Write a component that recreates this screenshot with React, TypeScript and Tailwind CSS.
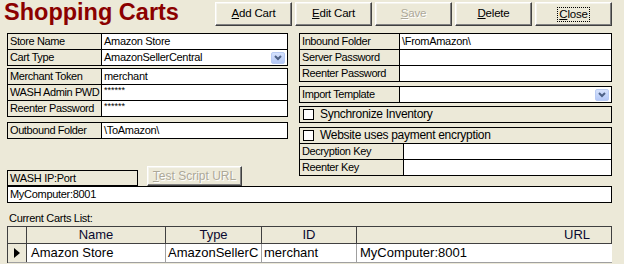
import type { ReactNode } from 'react';

const font = "font-['Liberation_Sans',Arial,sans-serif]";

type Row = { label: string; value?: string; combo?: boolean; small?: boolean };

function Btn({ children, disabled, focus, className = '' }: { children: ReactNode; disabled?: boolean; focus?: boolean; className?: string }) {
    return (
        <div
            className={`flex items-center justify-center bg-[#ECE9D8] border border-t-white border-l-white border-r-[#404040] border-b-[#404040] shadow-[inset_-1px_-1px_0_#808080,inset_1px_1px_0_#F4F3EC] ${
                disabled ? 'text-[#ACA899] [text-shadow:1px_1px_0_#fff]' : 'text-black'
            } ${className}`}
        >
            {focus ? (
                <span className="border border-dotted border-black px-px leading-[13px]">{children}</span>
            ) : (
                children
            )}
        </div>
    );
}

function ComboButton() {
    return (
        <div className="mr-[2px] flex h-[12px] w-[14px] items-center justify-center rounded-[2px] bg-gradient-to-b from-[#D6E2FC] to-[#B4C8F6] border border-[#B9CBF3]">
            <svg width="8" height="6" viewBox="0 0 8 6">
                <path d="M1 1 L4 4 L7 1" stroke="#4D6185" strokeWidth="2" fill="none" />
            </svg>
        </div>
    );
}

function FieldGroup({ rows, labelW }: { rows: Row[]; labelW: number }) {
    return (
        <div className="border border-black">
            {rows.map((r, i) => (
                <div key={r.label} className={`flex ${i > 0 ? 'h-[16px] border-t border-black' : 'h-[15px]'}`}>
                    <div
                        className="shrink-0 border-r border-black bg-[#ECE9D8] pl-[2px] text-[11px] leading-[15px] tracking-[-0.4px] whitespace-nowrap overflow-hidden"
                        style={{ width: labelW }}
                    >
                        {r.label}
                    </div>
                    <div className="flex flex-1 items-center bg-white">
                        <span
                            className={`flex-1 pl-[2px] whitespace-nowrap ${
                                r.small ? 'self-start text-[9px] leading-[10px]' : 'text-[11px] leading-[15px] tracking-[-0.3px]'
                            }`}
                        >
                            {r.value}
                        </span>
                        {r.combo && <ComboButton />}
                    </div>
                </div>
            ))}
        </div>
    );
}

function CheckRow({ label }: { label: string }) {
    return (
        <div className="flex h-[15px] items-center bg-[#ECE9D8] pl-[3px]">
            <div className="h-[11px] w-[11px] border border-black bg-white" />
            <span className="ml-[6px] text-[12px] leading-[15px] tracking-[-0.3px]">{label}</span>
        </div>
    );
}

export default function App() {
    return (
        <div className={`${font} h-[264px] w-[624px] overflow-hidden bg-[#ECE9D8] text-black`}>
            {/* Header */}
            <div className="flex h-[33px]">
                <div className="w-[215px] pl-[4px] pt-[1px] text-[23.5px] font-bold leading-[23px] text-[#8B0000]">
                    Shopping Carts
                </div>
                <div className="flex gap-[3px] pt-[2px] text-[11.5px] tracking-[-0.2px]">
                    <Btn className="h-[24px] w-[77px]"><span><u>A</u>dd Cart</span></Btn>
                    <Btn className="h-[24px] w-[77px]"><span><u>E</u>dit Cart</span></Btn>
                    <Btn className="h-[24px] w-[77px]" disabled><span><u>S</u>ave</span></Btn>
                    <Btn className="h-[24px] w-[77px]"><span><u>D</u>elete</span></Btn>
                    <Btn className="h-[24px] w-[77px]" focus><span><u>C</u>lose</span></Btn>
                </div>
            </div>

            {/* Form columns */}
            <div className="flex gap-[11px] px-[7px]">
                <div className="flex w-[281px] flex-col">
                    <FieldGroup
                        labelW={94}
                        rows={[
                            { label: 'Store Name', value: 'Amazon Store' },
                            { label: 'Cart Type', value: 'AmazonSellerCentral', combo: true },
                        ]}
                    />
                    <div className="mt-[2px]">
                        <FieldGroup
                            labelW={94}
                            rows={[
                                { label: 'Merchant Token', value: 'merchant' },
                                { label: 'WASH Admin PWD', value: '******', small: true },
                                { label: 'Reenter Password', value: '******', small: true },
                            ]}
                        />
                    </div>
                    <div className="mt-[5px]">
                        <FieldGroup labelW={94} rows={[{ label: 'Outbound Folder', value: '\\ToAmazon\\' }]} />
                    </div>
                    <div className="mt-[27px] flex h-[20px] items-end gap-[9px]">
                        <div className="h-[16px] w-[131px] border border-black pl-[2px] text-[11px] leading-[14px] tracking-[-0.3px]">
                            WASH IP:Port
                        </div>
                        <Btn className="h-[20px] w-[95px] self-start text-[12px]" disabled>
                            <span><u>T</u>est Script URL</span>
                        </Btn>
                    </div>
                </div>

                <div className="flex w-[313px] flex-col">
                    <FieldGroup
                        labelW={100}
                        rows={[
                            { label: 'Inbound Folder', value: '\\FromAmazon\\' },
                            { label: 'Server Password', value: '' },
                            { label: 'Reenter Password', value: '' },
                        ]}
                    />
                    <div className="mt-[4px]">
                        <FieldGroup labelW={100} rows={[{ label: 'Import Template', value: '', combo: true }]} />
                    </div>
                    <div className="mt-[3px] border border-black">
                        <CheckRow label="Synchronize Inventory" />
                    </div>
                    <div className="mt-[4px] border border-black">
                        <CheckRow label="Website uses payment encryption" />
                        <div className="border-t border-black">
                            <div className="-m-px">
                                <FieldGroup
                                    labelW={104}
                                    rows={[
                                        { label: 'Decryption Key', value: '' },
                                        { label: 'Reenter Key', value: '' },
                                    ]}
                                />
                            </div>
                        </div>
                    </div>
                </div>
            </div>

            {/* IP field */}
            <div className="mx-[7px] mr-[12px] h-[17px] border border-black bg-white pl-[2px] text-[11px] leading-[15px] tracking-[-0.3px]">
                MyComputer:8001
            </div>

            <div className="h-[23px] pl-[9px] pt-[9px] text-[11px] leading-[12px] tracking-[-0.3px]">Current Carts List:</div>

            {/* Grid */}
            <div className="ml-[7px] w-[605px] border-t border-l border-[#404040] text-[13px]">
                <div className="flex h-[17px] border-b border-[#404040] bg-[#ECE9D8] leading-[16px] text-[#0A0A30]">
                    <div className="w-[19px] shrink-0 border-r border-[#404040]" />
                    <div className="w-[139px] shrink-0 border-r border-[#404040] text-center">Name</div>
                    <div className="w-[96px] shrink-0 border-r border-[#404040] text-center">Type</div>
                    <div className="w-[95px] shrink-0 border-r border-[#404040] text-center">ID</div>
                    <div className="flex-1 border-r border-[#404040] pl-[207px]">URL</div>
                </div>
                <div className="flex h-[19px] border-b border-[#A0A0A0] bg-white leading-[18px]">
                    <div className="flex w-[19px] shrink-0 items-center justify-center border-r border-[#404040] bg-[#ECE9D8]">
                        <svg width="6" height="10" viewBox="0 0 6 10">
                            <path d="M0 0 L6 5 L0 10 Z" fill="black" />
                        </svg>
                    </div>
                    <div className="w-[139px] shrink-0 overflow-hidden whitespace-nowrap border-r border-[#A0A0A0] pl-[4px]">Amazon Store</div>
                    <div className="w-[96px] shrink-0 overflow-hidden whitespace-nowrap border-r border-[#A0A0A0] pl-[2px]">AmazonSellerC</div>
                    <div className="w-[95px] shrink-0 overflow-hidden whitespace-nowrap border-r border-[#A0A0A0] pl-[2px]">merchant</div>
                    <div className="flex-1 whitespace-nowrap pl-[3px]">MyComputer:8001</div>
                </div>
            </div>
        </div>
    );
}
